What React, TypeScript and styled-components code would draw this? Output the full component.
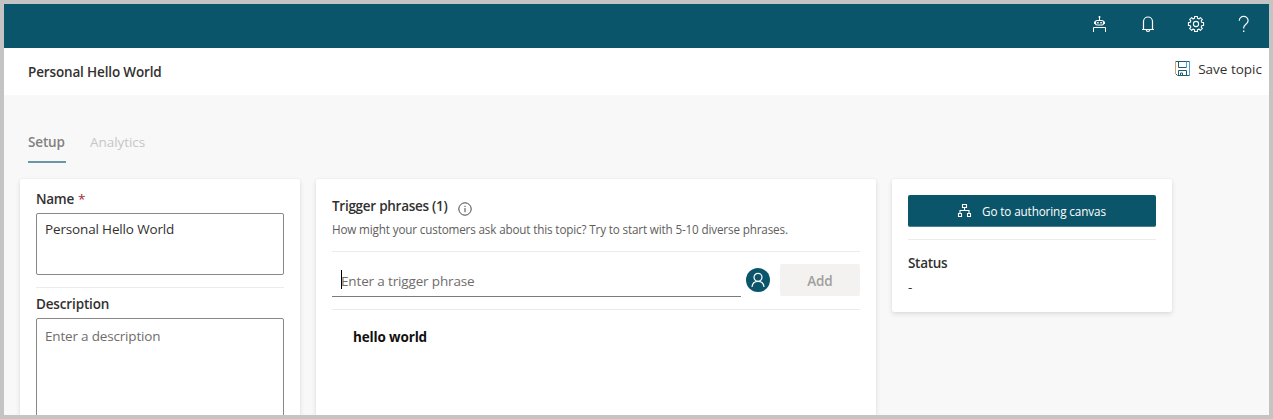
import React from 'react';
import styled, { createGlobalStyle } from 'styled-components';

const GlobalStyle = createGlobalStyle`
  *, *::before, *::after { box-sizing: border-box; }
  html, body { margin: 0; height: 100%; overflow: hidden; }
  body { font-family: "Segoe UI", "Open Sans", "Noto Sans", sans-serif; font-size: 14px; color: #323130; }
`;

const teal = '#0b556a';

const Frame = styled.div`
  width: 1273px;
  height: 419px;
  border: 4px solid #c4c4c4;
  background: #f8f8f8;
  display: flex;
  flex-direction: column;
  overflow: hidden;
`;

const Text = styled.span<{ $size?: number; $weight?: number; $track?: number; $color?: string }>`
  display: block;
  white-space: nowrap;
  line-height: 20px;
  font-size: ${(p) => p.$size ?? 13.5}px;
  font-weight: ${(p) => p.$weight ?? 400};
  letter-spacing: ${(p) => p.$track ?? -0.15}px;
  color: ${(p) => p.$color ?? '#323130'};
`;

const TopBar = styled.header`
  flex: none;
  height: 44px;
  background: ${teal};
  display: flex;
  justify-content: flex-end;
  align-items: center;
  gap: 28px;
  padding: 0 15px 4px 0;
  color: #fff;
`;

const Icon = styled.svg`
  display: block;
  flex: none;
  fill: none;
  stroke: currentColor;
`;

const TitleBar = styled.div`
  flex: none;
  height: 47px;
  background: #fff;
  display: flex;
  justify-content: space-between;
  align-items: flex-start;
  padding: 14px 7px 0 24px;
`;

const SaveButton = styled.div`
  display: flex;
  align-items: center;
  gap: 8px;
  margin-top: -3px;
  svg { color: #1f5c70; margin-top: -2px; }
`;

const Tabs = styled.nav`
  flex: none;
  display: flex;
  gap: 24px;
  height: 84px;
  padding: 37px 0 0 24px;
`;

const Tab = styled.div<{ $active?: boolean }>`
  width: ${(p) => (p.$active ? '38px' : 'auto')};
  height: 31px;
  border-bottom: 2px solid ${(p) => (p.$active ? '#6a97a4' : 'transparent')};
`;

const Columns = styled.main`
  flex: none;
  display: flex;
  align-items: flex-start;
  gap: 16px;
  padding-left: 16px;
`;

const Card = styled.section<{ $width: number; $height: number }>`
  width: ${(p) => p.$width}px;
  height: ${(p) => p.$height}px;
  background: #fff;
  border-radius: 2px;
  padding: 0 16px;
  box-shadow: 0 2px 5px rgba(0, 0, 0, 0.11), 0 0 2px rgba(0, 0, 0, 0.06);
`;

const FieldLabel = styled.div<{ $top: number }>`
  display: flex;
  gap: 4px;
  padding-top: ${(p) => p.$top}px;
`;

const Field = styled.div<{ $height: number; $top: number }>`
  height: ${(p) => p.$height}px;
  margin-top: 4px;
  border: 1px solid #8a8886;
  border-radius: 2px;
  padding: ${(p) => p.$top}px 8px 0;
`;

const Divider = styled.div<{ $top: number }>`
  height: 1px;
  background: #edebe9;
  margin-top: ${(p) => p.$top}px;
`;

const PhraseHeading = styled.div`
  display: flex;
  gap: 10px;
  padding-top: 17px;
  svg { margin-top: 6px; color: #484644; }
`;

const Hint = styled.div`
  padding-top: 3px;
`;

const PhraseRow = styled.div`
  display: flex;
  height: 57px;
  padding-top: 12px;
`;

const PhraseInput = styled.div`
  width: 409px;
  height: 33px;
  border-bottom: 1px solid #7d7b79;
  padding: 7px 0 0 9px;
  display: flex;
`;

const Caret = styled.i`
  width: 1px;
  height: 19px;
  margin: -1px -1px 0 0;
  background: #000;
`;

const Avatar = styled.div`
  width: 24px;
  height: 24px;
  margin: 4px 10px 0 5px;
  border-radius: 50%;
  background: ${teal};
  color: #fff;
  display: flex;
  align-items: center;
  justify-content: center;
`;

const AddButton = styled.div`
  width: 80px;
  height: 32px;
  border-radius: 2px;
  background: #f3f2f1;
  display: flex;
  align-items: center;
  justify-content: center;
  padding-top: 2px;
`;

const Phrase = styled.div`
  padding: 17px 0 0 21px;
`;

const CanvasButton = styled.div`
  height: 32px;
  margin-top: 16px;
  border-radius: 2px;
  background: ${teal};
  border-bottom: 1px solid #4a7f8f;
  color: #fff;
  display: flex;
  align-items: center;
  padding: 0 0 0 49px;
  gap: 10px;
`;

const StatusBlock = styled.div`
  padding-top: 13px;
  display: grid;
  gap: 4px;
`;

const BotIcon = () => (
  <Icon width="20" height="20" viewBox="0 0 20 20">
    <rect x="5.5" y="6.5" width="8" height="4.5" rx="1.5" strokeWidth="1.2" />
    <path d="M9.5 2.5v4M4.5 7.500v2.500M14.500 7.500v2.500M3.500 18v-4.500h12V18" />
    <path d="M7.200 8h1.500v1.500H7.200zM10.300 8h1.500v1.500h-1.500z" fill="currentColor" stroke="none" />
    <circle cx="9.5" cy="3" r="1" fill="currentColor" stroke="none" />
  </Icon>
);

const BellIcon = () => (
  <Icon width="20" height="20" viewBox="0 0 20 20" strokeWidth="1.2">
    <path d="M4 15.500h12M5.500 15.500V7.500a4.500 4.500 0 0 1 9 0v8M8.300 15.800a1.700 1.700 0 0 0 3.400 0" />
  </Icon>
);

const gearPath = (() => {
  const pts: string[] = [];
  for (let i = 0; i < 8; i++) {
    const a = (i * Math.PI) / 4;
    [[-0.24, 6], [-0.19, 7.7], [0.19, 7.7], [0.24, 6]].forEach(([d, r]) => {
      pts.push(`${(10 + r * Math.sin(a + d)).toFixed(2)} ${(10 + r * Math.cos(a + d)).toFixed(2)}`);
    });
  }
  return `M${pts.join('L')}Z`;
})();

const GearIcon = () => (
  <Icon width="20" height="20" viewBox="0 0 20 20" strokeWidth="1.1" strokeLinejoin="round">
    <path d={gearPath} />
    <circle cx="10" cy="10" r="2.6" />
  </Icon>
);

const HelpIcon = () => (
  <Icon width="20" height="20" viewBox="0 0 20 20" strokeWidth="1.2">
    <path d="M5.300 6.800a4.400 4.400 0 0 1 8.800 0c0 3.400-4.400 3.600-4.400 7v.8" />
    <path d="M9 16.600h1.400v1.400H9z" fill="currentColor" stroke="none" />
  </Icon>
);

const SaveIcon = () => (
  <Icon width="15" height="15" viewBox="0 0 15 15">
    <path d="M.5 12.500l2 2h12M.5.5h14M3.500 6.500h8M3.500 14.500v-5h8v5M5.500 14.500v-2.500h2v2.500M3.500.5v6" />
    <path d="M.5 0v12.500" stroke="#d9a06c" />
    <path d="M14.500 0v15M11.500.5v6" stroke="#4f9fc6" />
  </Icon>
);

const InfoIcon = () => (
  <Icon width="14" height="14" viewBox="0 0 14 14">
    <circle cx="7" cy="7" r="6.2" />
    <path d="M7 6v4.200M7 3.800v1.200" />
  </Icon>
);

const PersonIcon = () => (
  <Icon width="16" height="16" viewBox="0 0 16 16" strokeWidth="1.2">
    <circle cx="8" cy="5.300" r="4" />
    <path d="M2 15c.3-3.400 2.700-5.700 6-5.700s5.700 2.300 6 5.700" />
  </Icon>
);

const FlowIcon = () => (
  <Icon width="15" height="15" viewBox="0 0 15 15" strokeWidth="1.1">
    <path d="M5.500 1.500h4v3h-4zM1.500 10.500h3v3h-3zM10.500 10.500h3v3h-3zM7.500 4.500v3M3 10.500v-3h9v3" />
  </Icon>
);

export default function App() {
  return (
    <>
      <GlobalStyle />
      <Frame>
        <TopBar>
          <BotIcon />
          <BellIcon />
          <GearIcon />
          <HelpIcon />
        </TopBar>
        <TitleBar>
          <Text $weight={600}>Personal Hello World</Text>
          <SaveButton>
            <SaveIcon />
            <Text $track={0}>Save topic</Text>
          </SaveButton>
        </TitleBar>
        <Tabs>
          <Tab $active>
            <Text $weight={600} $color="#828180">Setup</Text>
          </Tab>
          <Tab>
            <Text $color="#c8c6c4" $track={-0.05}>Analytics</Text>
          </Tab>
        </Tabs>
        <Columns>
          <Card $width={280} $height={260}>
            <FieldLabel $top={10}>
              <Text $weight={600} $track={-0.3}>Name</Text>
              <Text $color="#a4262c">*</Text>
            </FieldLabel>
            <Field $height={62} $top={5}>
              <Text>Personal Hello World</Text>
            </Field>
            <Divider $top={12} />
            <FieldLabel $top={6}>
              <Text $weight={600}>Description</Text>
            </FieldLabel>
            <Field $height={140} $top={7}>
              <Text $color="#6f6d6b" $track={-0.18}>Enter a description</Text>
            </Field>
          </Card>
          <Card $width={560} $height={260}>
            <PhraseHeading>
              <Text $weight={600} $track={-0.27}>Trigger phrases (1)</Text>
              <InfoIcon />
            </PhraseHeading>
            <Hint>
              <Text $size={11.7} $track={-0.155} $color="#605e5c">
                How might your customers ask about this topic? Try to start with 5-10 diverse phrases.
              </Text>
            </Hint>
            <Divider $top={12} />
            <PhraseRow>
              <PhraseInput>
                <Caret />
                <Text $color="#6f6d6b">Enter a trigger phrase</Text>
              </PhraseInput>
              <Avatar>
                <PersonIcon />
              </Avatar>
              <AddButton>
                <Text $weight={600} $color="#a19f9d">Add</Text>
              </AddButton>
            </PhraseRow>
            <Divider $top={0} />
            <Phrase>
              <Text $weight={700} $color="#11100f">hello world</Text>
            </Phrase>
          </Card>
          <Card $width={280} $height={133}>
            <CanvasButton>
              <FlowIcon />
              <Text $size={11.7} $track={-0.11} $color="#fff">Go to authoring canvas</Text>
            </CanvasButton>
            <Divider $top={12} />
            <StatusBlock>
              <Text $weight={600} $track={-0.3}>Status</Text>
              <Text>-</Text>
            </StatusBlock>
          </Card>
        </Columns>
      </Frame>
    </>
  );
}
